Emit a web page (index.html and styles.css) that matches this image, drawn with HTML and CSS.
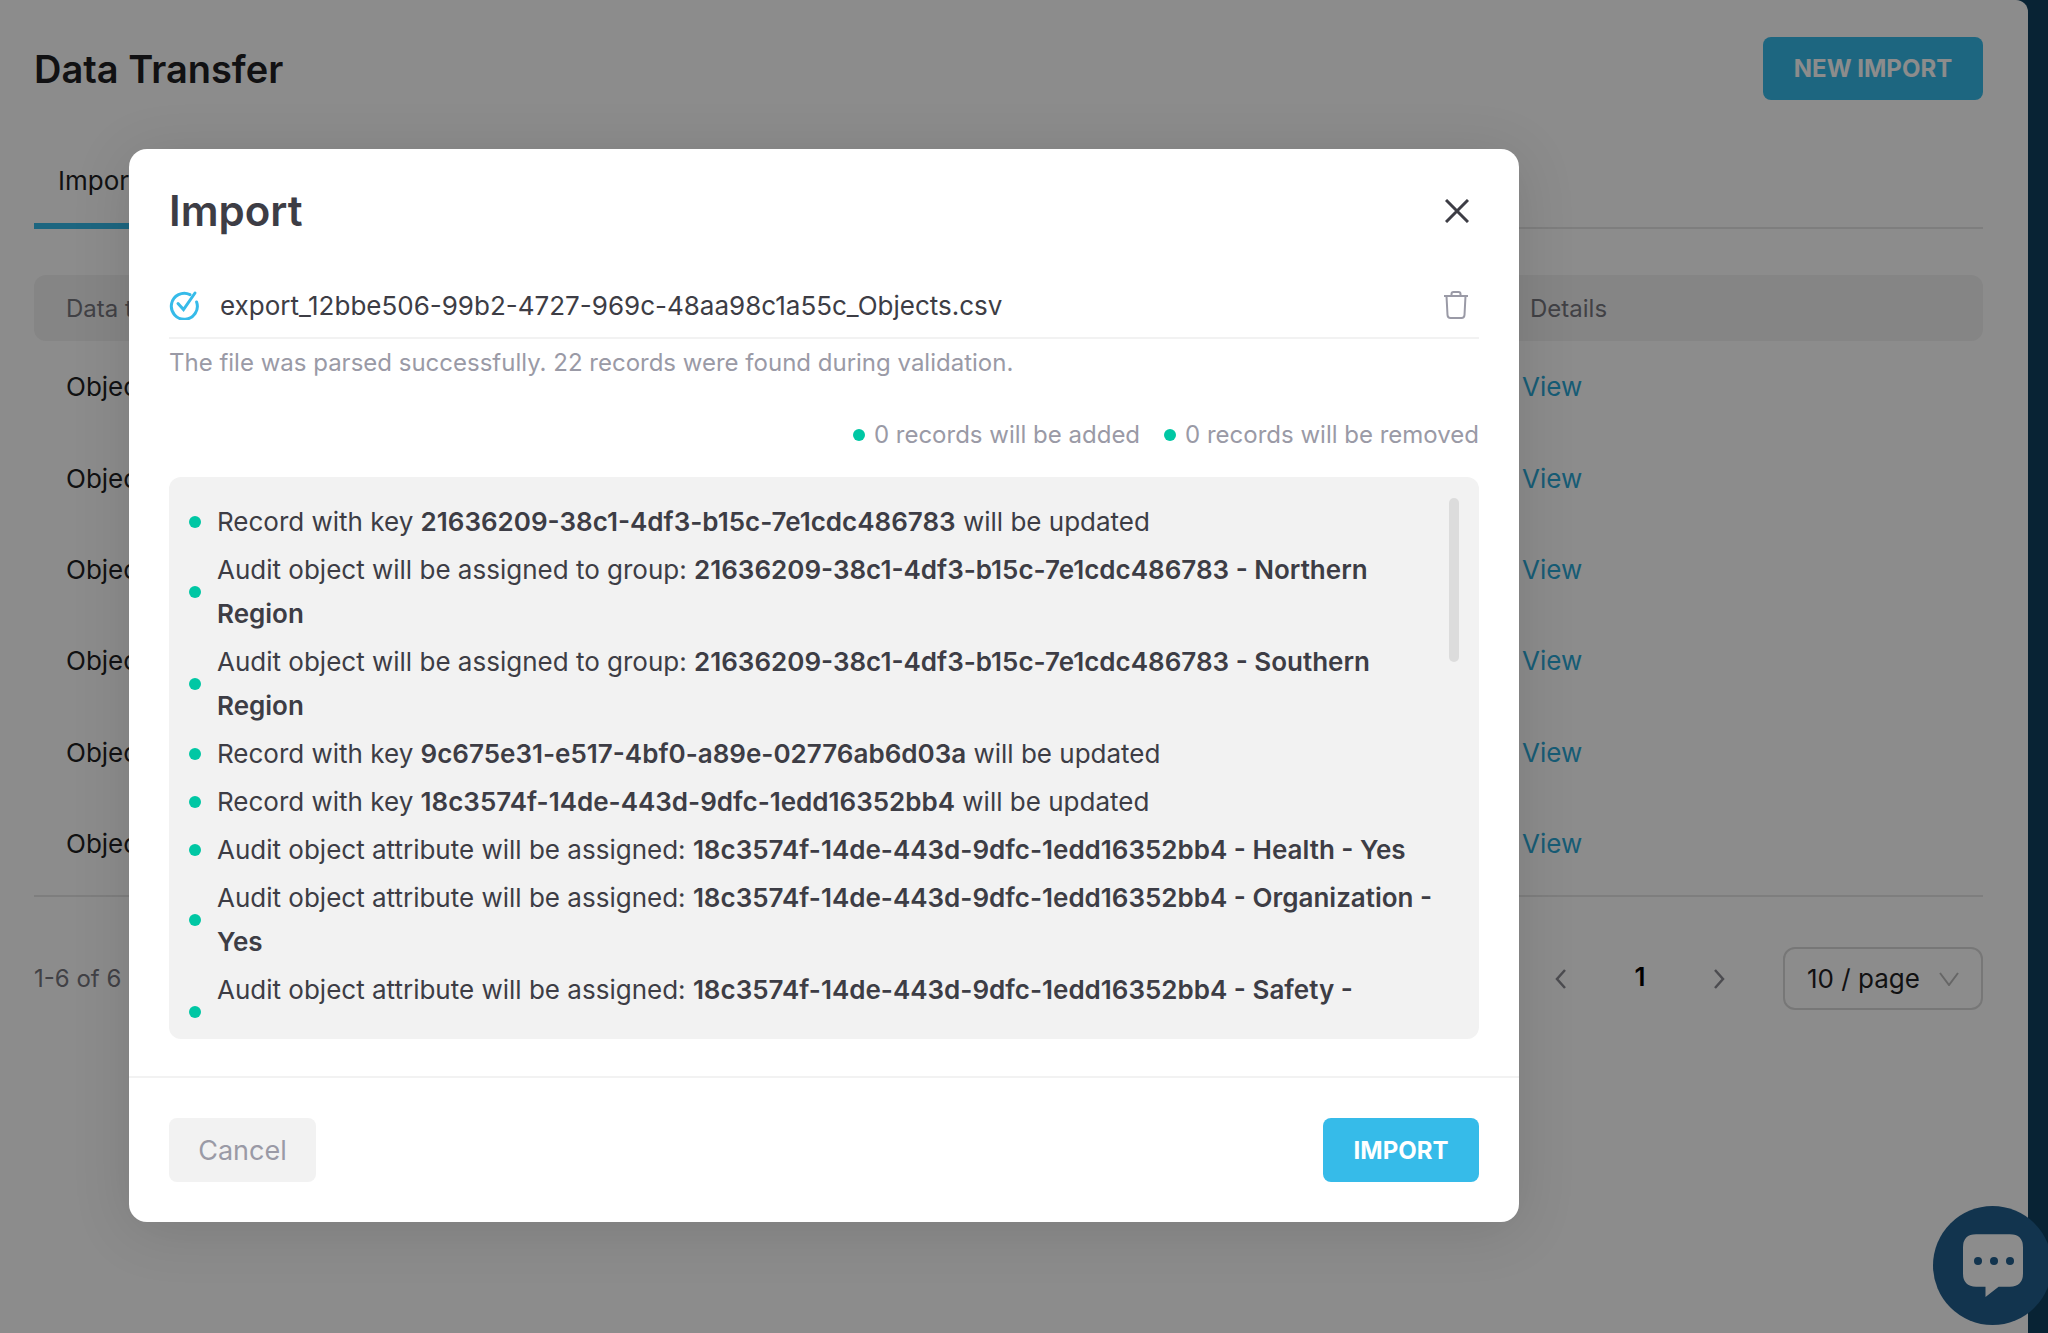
FILE: index.html
```html
<!DOCTYPE html>
<html lang="en">
<head>
    <meta charset="UTF-8">
    <meta name="viewport" content="width=device-width, initial-scale=1.0">
    <title>Data Transfer</title>
    <link rel="stylesheet" href="styles.css">
</head>
<body>
    <div class="app">
        <div class="main">
            <div class="page-header">
                <h1>Data Transfer</h1>
                <button class="new-btn">NEW IMPORT</button>
            </div>

            <div class="tabs">
                <div class="tab active">Imports</div>
            </div>

            <div class="table">
                <div class="table-head">
                    <span>Data type</span>
                    <span>Details</span>
                </div>
                <div class="table-row"><span>Objects</span><a>View</a></div>
                <div class="table-row"><span>Objects</span><a>View</a></div>
                <div class="table-row"><span>Objects</span><a>View</a></div>
                <div class="table-row"><span>Objects</span><a>View</a></div>
                <div class="table-row"><span>Objects</span><a>View</a></div>
                <div class="table-row"><span>Objects</span><a>View</a></div>
            </div>

            <div class="pagination">
                <span class="range">1-6 of 6</span>
                <div class="pager">
                    <svg class="chev" viewBox="0 0 14 22"><path d="M11 2 3 11l8 9"/></svg>
                    <span class="page-num">1</span>
                    <svg class="chev" viewBox="0 0 14 22"><path d="m3 2 8 9-8 9"/></svg>
                    <div class="page-select">
                        <span>10 / page</span>
                        <svg class="select-arrow" viewBox="0 0 20 14"><path d="m1 1 9 12 9-12"/></svg>
                    </div>
                </div>
            </div>
        </div>
        <div class="sidebar"></div>
    </div>

    <div class="overlay">
        <div class="modal">
            <div class="modal-body">
                <div class="modal-title">
                    <h2>Import</h2>
                    <svg class="close-icon" viewBox="0 0 24 24"><path d="M1 1l22 22M23 1 1 23"/></svg>
                </div>

                <div class="file-row">
                    <svg class="check-icon" viewBox="0 0 30 30"><path d="M21 4.6A13 13 0 1 0 27.6 12"/><path d="m9 13.5 5.5 6L26 3"/></svg>
                    <span class="file-name">export_12bbe506-99b2-4727-969c-48aa98c1a55c_Objects.csv</span>
                    <svg class="trash-icon" viewBox="0 0 26 28"><path d="M1 5h24M8.500 5V3q0-2 2-2h5q2 0 2 2v2M3.500 5l1 19q.2 3 3 3h11q2.800 0 3-3l1-19"/></svg>
                </div>
                <p class="parse-msg">The file was parsed successfully. 22 records were found during validation.</p>

                <div class="legend">
                    <span class="legend-item"><i class="dot"></i>0 records will be added</span>
                    <span class="legend-item"><i class="dot"></i>0 records will be removed</span>
                </div>

                <div class="records">
                    <ul class="record-list">
                        <li><i class="dot"></i><span>Record with key <b>21636209-38c1-4df3-b15c-7e1cdc486783</b> will be updated</span></li>
                        <li><i class="dot"></i><span>Audit object will be assigned to group: <b>21636209-38c1-4df3-b15c-7e1cdc486783 - Northern Region</b></span></li>
                        <li><i class="dot"></i><span>Audit object will be assigned to group: <b>21636209-38c1-4df3-b15c-7e1cdc486783 - Southern Region</b></span></li>
                        <li><i class="dot"></i><span>Record with key <b>9c675e31-e517-4bf0-a89e-02776ab6d03a</b> will be updated</span></li>
                        <li><i class="dot"></i><span>Record with key <b>18c3574f-14de-443d-9dfc-1edd16352bb4</b> will be updated</span></li>
                        <li><i class="dot"></i><span>Audit object attribute will be assigned: <b>18c3574f-14de-443d-9dfc-1edd16352bb4 - Health - Yes</b></span></li>
                        <li><i class="dot"></i><span>Audit object attribute will be assigned: <b>18c3574f-14de-443d-9dfc-1edd16352bb4 - Organization - Yes</b></span></li>
                        <li><i class="dot"></i><span>Audit object attribute will be assigned: <b>18c3574f-14de-443d-9dfc-1edd16352bb4 - Safety - Operations</b></span></li>
                    </ul>
                    <div class="scroll-thumb"></div>
                </div>
            </div>

            <div class="modal-footer">
                <button class="cancel-btn">Cancel</button>
                <button class="import-btn">IMPORT</button>
            </div>
        </div>
    </div>

    <div class="chat-btn">
        <svg viewBox="0 0 64 68"><path fill-rule="evenodd" d="M14 0h36q14 0 14 14v28q0 14-14 14H38L24 67V56H14Q0 56 0 42V14Q0 0 14 0Z"/></svg>
        <div class="chat-dots"><i></i><i></i><i></i></div>
    </div>
</body>
</html>
```

FILE: styles.css
```css
* {
    margin: 0;
    padding: 0;
    box-sizing: border-box;
}

html, body {
    height: 100%;
    overflow: hidden;
}

body {
    font-family: Inter, 'Noto Sans', sans-serif;
    font-size: 26px;
    color: #3d3d45;
    background: #fff;
}

button {
    font-family: inherit;
    border: none;
}

.app {
    display: flex;
    height: 1333px;
    background: #10405f;
}

.main {
    flex: 1;
    background: #fff;
    border-top-right-radius: 12px;
    padding: 37px 45px 0 34px;
}

.sidebar {
    width: 20px;
}

.page-header {
    display: flex;
    justify-content: space-between;
    align-items: center;
}

.page-header h1 {
    font-size: 38px;
    font-weight: 600;
    color: #1f1f24;
}

.new-btn {
    width: 220px;
    height: 63px;
    background: #36bbe9;
    color: #fff;
    border-radius: 8px;
    font-size: 24px;
    font-weight: 700;
}

.tabs {
    margin-top: 49px;
    height: 80px;
    border-bottom: 2px solid #e6e6e6;
}

.tab {
    width: 190px;
    height: 80px;
    padding: 16px 24px 0;
    border-bottom: 6px solid #36bbe9;
    color: #1f1f24;
}

.table-head {
    display: flex;
    justify-content: space-between;
    margin-top: 46px;
    height: 66px;
    align-items: center;
    padding: 0 32px;
    background: #f2f2f2;
    border-radius: 12px;
    font-size: 24px;
    color: #77777f;
}

.table-head span:last-child {
    width: 421px;
}

.table-row {
    display: flex;
    justify-content: space-between;
    align-items: center;
    height: 91.4px;
    padding: 0 32px;
    color: #1f1f24;
}

.table-row:first-of-type {
    margin-top: 13px;
}

.table-row a {
    width: 429px;
    color: #2ba8d6;
}

.pagination {
    display: flex;
    justify-content: space-between;
    align-items: center;
    margin-top: 6px;
    padding-top: 50px;
    border-top: 2px solid #e6e6e6;
}

.range {
    font-size: 24px;
    color: #77777f;
}

.pager {
    display: flex;
    align-items: center;
}

.chev {
    width: 14px;
    height: 22px;
    fill: none;
    stroke: #8a8a92;
    stroke-width: 2.500;
}

.page-num {
    width: 144px;
    text-align: center;
    font-weight: 600;
    color: #000;
    margin-top: -4px;
}

.page-select {
    display: flex;
    justify-content: space-between;
    align-items: center;
    width: 200px;
    height: 63px;
    margin-left: 57px;
    padding: 0 22px 0 22px;
    border: 2px solid #d9d9d9;
    border-radius: 12px;
    color: #1f1f24;
}

.select-arrow {
    width: 20px;
    height: 14px;
    fill: none;
    stroke: #bbb;
    stroke-width: 2;
}

.overlay {
    position: absolute;
    top: 0;
    left: 0;
    width: 100%;
    height: 100%;
    padding: 149px 0 0 129px;
    background: rgba(0, 0, 0, 0.45);
}

.modal {
    width: 1390px;
    height: 1073px;
    background: #fff;
    border-radius: 18px;
    box-shadow: 0 8px 60px rgba(0, 0, 0, 0.12);
}

.modal-body {
    height: 929px;
    padding: 36px 40px 0;
    border-bottom: 2px solid #f2f2f2;
}

.modal-title {
    display: flex;
    justify-content: space-between;
    align-items: center;
}

.modal-title h2 {
    font-size: 42px;
    font-weight: 600;
    color: #3d3d45;
}

.close-icon {
    width: 24px;
    height: 24px;
    margin-right: 10px;
    fill: none;
    stroke: #3d3d45;
    stroke-width: 3;
}

.file-row {
    display: flex;
    align-items: center;
    height: 66px;
    margin-top: 37px;
    border-bottom: 2px solid #f2f2f2;
}

.check-icon {
    width: 30px;
    height: 30px;
    fill: none;
    stroke: #36bbe9;
    stroke-width: 3;
    stroke-linecap: round;
}

.file-name {
    flex: 1;
    margin-left: 21px;
}

.trash-icon {
    width: 26px;
    height: 28px;
    margin-right: 10px;
    fill: none;
    stroke: #9a9aa6;
    stroke-width: 2;
}

.parse-msg {
    margin-top: 9px;
    font-size: 24px;
    color: #9a9aa6;
}

.legend {
    display: flex;
    justify-content: flex-end;
    gap: 24px;
    margin-top: 43px;
    font-size: 24px;
    color: #9a9aa6;
}

.legend-item {
    display: flex;
    align-items: center;
}

.dot {
    flex: none;
    width: 12px;
    height: 12px;
    margin-right: 9px;
    border-radius: 50%;
    background: #00c7a4;
}

.records {
    position: relative;
    margin-top: 28px;
    height: 562px;
    padding: 21px 24px 21px 20px;
    background: #f2f2f2;
    border-radius: 12px;
}

.record-list {
    height: 520px;
    overflow: hidden;
    list-style: none;
}

.record-list li {
    display: flex;
    align-items: center;
    padding: 2px 0;
    line-height: 44px;
}

.record-list .dot {
    margin-right: 16px;
}

.record-list b {
    font-weight: 600;
}

.scroll-thumb {
    position: absolute;
    top: 21px;
    right: 20px;
    width: 10px;
    height: 164px;
    border-radius: 5px;
    background: #dcdcdc;
}

.modal-footer {
    display: flex;
    justify-content: space-between;
    padding: 40px 40px 0;
}

.cancel-btn {
    width: 147px;
    height: 64px;
    background: #f2f2f2;
    color: #9a9aa6;
    border-radius: 8px;
    font-size: 27px;
}

.import-btn {
    width: 156px;
    height: 64px;
    background: #36bbe9;
    color: #fff;
    border-radius: 8px;
    font-size: 24px;
    font-weight: 700;
}

.chat-btn {
    position: absolute;
    left: 1933px;
    top: 1206px;
    width: 119px;
    height: 119px;
    border-radius: 50%;
    background: #12344e;
    display: flex;
    align-items: center;
    justify-content: center;
}

.chat-btn svg {
    width: 60px;
    height: 64px;
    fill: #8c8c8c;
}

.chat-dots {
    position: absolute;
    top: 51px;
    left: 41px;
    display: flex;
    gap: 8px;
}

.chat-dots i {
    width: 8px;
    height: 8px;
    border-radius: 50%;
    background: #12344e;
}
```
